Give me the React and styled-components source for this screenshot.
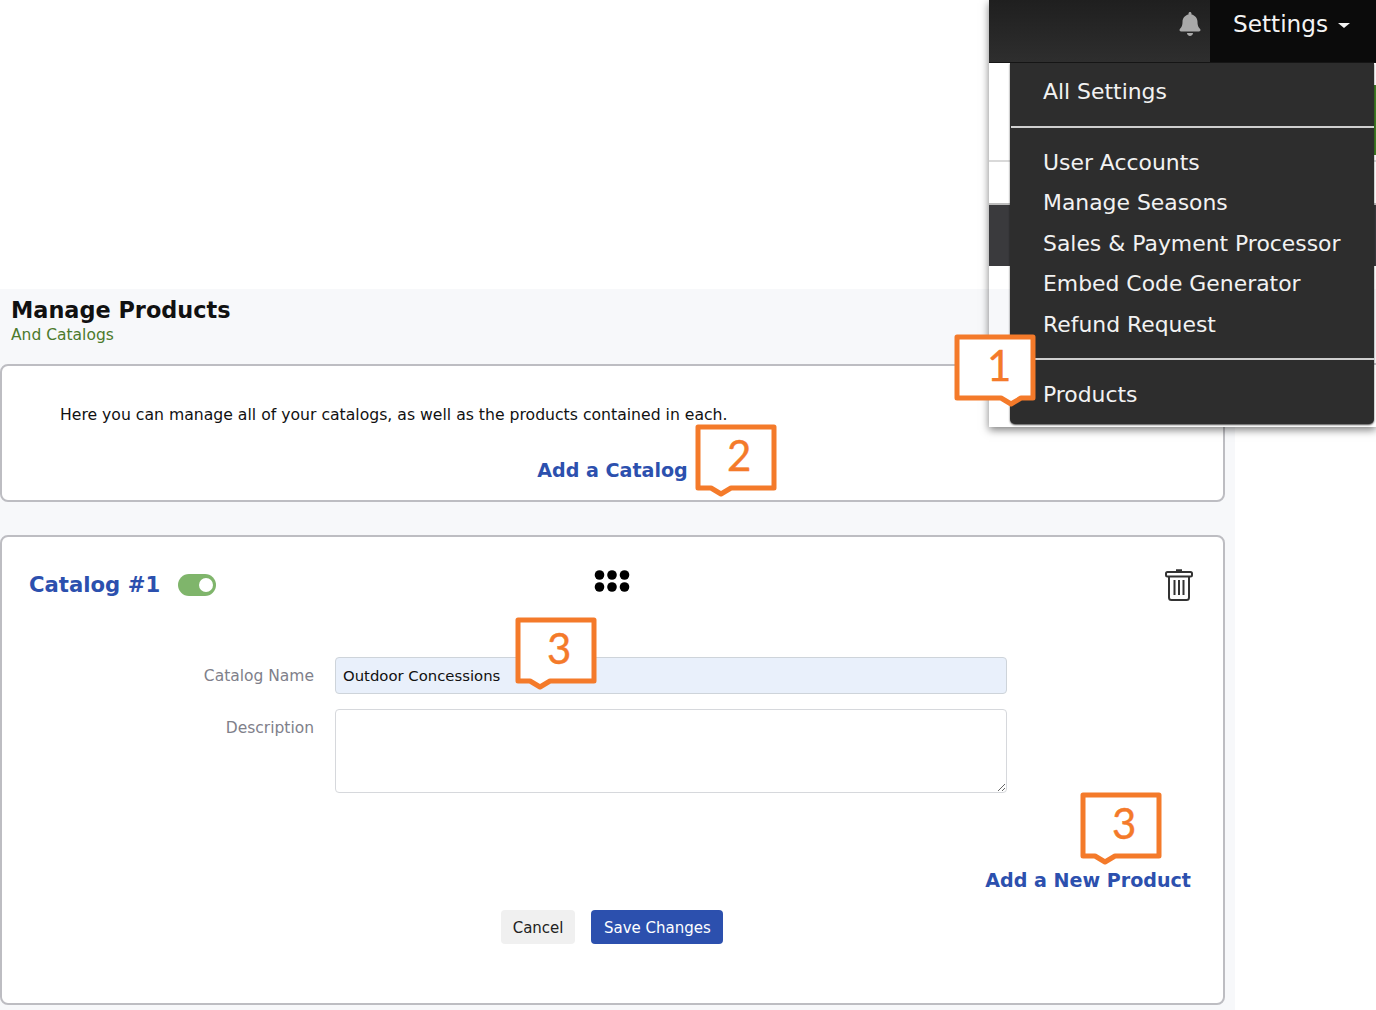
import React from "react";
import styled, { createGlobalStyle } from "styled-components";
import { FaBell } from "react-icons/fa";

const GlobalStyle = createGlobalStyle`
    html, body {
        margin: 0;
        padding: 0;
        background: #fff;
        font-family: "DejaVu Sans", Verdana, sans-serif;
    }
    * { box-sizing: border-box; }
`;

const Page = styled.div`
    position: relative;
    width: 1376px;
    height: 1010px;
    overflow: hidden;
    padding-top: 289px;
`;

const Main = styled.main`
    width: 1235px;
    height: 721px;
    background: #f7f8fa;
`;

const PageHeader = styled.header`
    padding: 7px 11px 0;
    height: 75px;
`;

const PageTitle = styled.h1`
    margin: 0;
    font-size: 22.4px;
    line-height: 28px;
    font-weight: 700;
    color: #111;
`;

const PageSubtitle = styled.div`
    margin-top: 1px;
    font-size: 15.5px;
    line-height: 20px;
    color: #4c7a2c;
`;

const Card = styled.section`
    width: 1225px;
    background: #fff;
    border: 2px solid #bdbdc2;
    border-radius: 8px;
`;

const IntroCard = styled(Card)`
    padding: 39px 58px 17px;
    margin-bottom: 33px;
`;

const IntroText = styled.p`
    margin: 0 0 34px;
    font-size: 15.67px;
    line-height: 20px;
    color: #111;
`;

const BlueLink = styled.a`
    font-size: 19.1px;
    line-height: 24px;
    font-weight: 700;
    color: #2c50ae;
    text-decoration: none;
`;

const CenterLine = styled.div`
    display: flex;
    justify-content: center;
    margin-left: -58px;
    margin-right: -58px;
`;

const CatalogCard = styled(Card)`
    padding: 32px 30px 59px 27px;
`;

const CatalogHeader = styled.div`
    display: grid;
    grid-template-columns: 1fr auto 1fr;
    align-items: center;
    height: 32px;
`;

const CatalogTitle = styled.div`
    display: flex;
    align-items: center;
    gap: 18px;
`;

const CatalogName = styled.h2`
    margin: 0;
    font-size: 21.2px;
    line-height: 28px;
    font-weight: 700;
    color: #2c50ae;
`;

const Toggle = styled.span`
    display: flex;
    justify-content: flex-end;
    align-items: center;
    width: 38px;
    height: 22px;
    padding-right: 3px;
    border-radius: 11px;
    background: #7fb56b;
`;

const ToggleKnob = styled.span`
    width: 14px;
    height: 14px;
    border-radius: 50%;
    background: #fff;
`;

const GripIcon = styled.svg`
    display: block;
    margin-top: -8px;
    margin-left: 1px;
`;

const TrashIcon = styled.svg`
    display: block;
    justify-self: end;
`;

const Form = styled.form`
    margin-top: 56px;
    display: grid;
    grid-template-columns: 285px 672px;
    column-gap: 21px;
    row-gap: 15px;
`;

const FieldLabel = styled.label`
    text-align: right;
    font-size: 15.5px;
    line-height: 20px;
    color: #80808a;
    padding-top: ${props => props.$offset}px;
`;

const TextInput = styled.input`
    width: 100%;
    height: 37px;
    padding: 0 7px;
    font-family: inherit;
    font-size: 14.85px;
    color: #111;
    background: #e9f0fb;
    border: 1px solid #ced4da;
    border-radius: 4px;
    outline: none;
`;

const TextArea = styled.textarea`
    display: block;
    width: 100%;
    height: 84px;
    padding: 7px;
    font-family: inherit;
    background: #fff;
    border: 1px solid #d6d8dc;
    border-radius: 4px;
    outline: none;
`;

const AddProductLine = styled.div`
    display: flex;
    justify-content: flex-end;
    margin-top: 76px;
    padding-right: 2px;
`;

const Buttons = styled.div`
    display: flex;
    justify-content: center;
    gap: 16px;
    margin-top: 17px;
    padding-left: 2px;
`;

const Button = styled.button`
    height: 34px;
    padding: 2px ${props => (props.$primary ? "12.5px" : "12px")} 0;
    font-family: inherit;
    font-size: 15px;
    border: none;
    border-radius: 4px;
    color: ${props => (props.$primary ? "#fff" : "#222")};
    background: ${props => (props.$primary ? "#2c50ae" : "#f0f0f0")};
`;

/* the settings window pasted over the page */
const SettingsShot = styled.div`
    position: absolute;
    top: 0;
    left: 989px;
    width: 387px;
    height: 427px;
    display: flex;
    flex-direction: column;
    background: #fff;
    box-shadow: 0 3px 8px rgba(0, 0, 0, 0.5);
`;

const TopBar = styled.div`
    display: flex;
    justify-content: flex-end;
    align-items: stretch;
    height: 63px;
    flex-shrink: 0;
    background: linear-gradient(#1f1f1f, #2e2e2e);
    border-bottom: 1px solid #161616;
`;

const BellSlot = styled.div`
    display: flex;
    justify-content: center;
    padding-top: 12px;
    width: 40px;
    color: #a9a9a9;
    font-size: 24px;
`;

const SettingsTab = styled.div`
    display: flex;
    align-items: center;
    gap: 10px;
    width: 166px;
    padding: 0 0 16px 23px;
    background: #0b0b0b;
    color: #f4f4f4;
    font-size: 23.2px;
`;

const Caret = styled.span`
    width: 0;
    height: 0;
    margin-top: 4px;
    border-left: 6px solid transparent;
    border-right: 6px solid transparent;
    border-top: 5px solid #f4f4f4;
`;

const Backdrop = styled.div`
    display: flex;
    flex-direction: column;
    flex: 1;
    width: 100%;
`;

const BackdropBand = styled.div`
    height: ${props => props.$height}px;
    background: ${props => props.$color};
`;

const GreenEdge = styled.div`
    position: absolute;
    top: 85px;
    right: 0;
    width: 2px;
    height: 70px;
    background: #3f7d24;
`;

const Menu = styled.nav`
    position: absolute;
    top: 63px;
    left: 21px;
    width: 364px;
    height: 361px;
    padding-top: 9px;
    background: #2d2d2d;
    border-radius: 0 0 5px 5px;
    box-shadow: 0 1px 2px rgba(0, 0, 0, 0.7);
`;

const MenuItem = styled.a`
    display: block;
    height: 40.6px;
    padding-left: 33px;
    font-size: 21.9px;
    line-height: 40px;
    color: #f2f2f2;
    white-space: nowrap;
`;

const MenuDivider = styled.hr`
    height: 2px;
    margin: ${props => props.$top}px 0 ${props => props.$bottom}px 1px;
    border: none;
    background: #cfcfcf;
`;

/* numbered orange markers that sit over the page */
const CalloutBox = styled.div`
    position: absolute;
    left: ${props => props.$left}px;
    top: ${props => props.$top}px;
    width: 82px;
    height: 74px;
`;

const CalloutShape = styled.svg`
    display: block;
`;

const CalloutNumber = styled.span`
    position: absolute;
    top: 6px;
    left: ${props => props.$x}px;
    font-family: Lato, "Open Sans", sans-serif;
    font-size: 42px;
    line-height: 50px;
    color: #f47a2a;
    -webkit-text-stroke: 0.4px #f47a2a;
`;

const Callout = ({ left, top, tail, numberX, children }) => (
    <CalloutBox $left={left} $top={top}>
        <CalloutShape width="82" height="74" viewBox="0 0 82 74">
            <path
                d={`M3 3H79V64H${tail + 10}L${tail} 70L${tail - 10} 64H3Z`}
                fill="#fff"
                stroke="#f47a2a"
                strokeWidth="5"
                strokeLinejoin="round"
            />
        </CalloutShape>
        <CalloutNumber $x={numberX}>{children}</CalloutNumber>
    </CalloutBox>
);

const Grip = () => (
    <GripIcon width="36" height="24" viewBox="0 0 36 24" fill="#000">
        {[5.5, 18, 30.5].map(x => [6, 18].map(y => <circle key={x + "-" + y} cx={x} cy={y} r="4.8" />))}
    </GripIcon>
);

const Trash = () => (
    <TrashIcon width="28" height="32" viewBox="0 0 28 32" fill="none" stroke="#333" strokeWidth="2">
        <path d="M11 1.5H17" strokeWidth="2.5" />
        <rect x="1" y="3" width="26" height="4.5" rx="1.5" />
        <path d="M4 8V28.5Q4 31 6.5 31H21.5Q24 31 24 28.5V8" />
        <path d="M9.5 11V26M14 11V26M18.5 11V26" />
    </TrashIcon>
);

const App = () => {
    return (
        <Page>
            <GlobalStyle />
            <Main>
                <PageHeader>
                    <PageTitle>Manage Products</PageTitle>
                    <PageSubtitle>And Catalogs</PageSubtitle>
                </PageHeader>
                <IntroCard>
                    <IntroText>Here you can manage all of your catalogs, as well as the products contained in each.</IntroText>
                    <CenterLine>
                        <BlueLink>Add a Catalog</BlueLink>
                    </CenterLine>
                </IntroCard>
                <CatalogCard>
                    <CatalogHeader>
                        <CatalogTitle>
                            <CatalogName>Catalog #1</CatalogName>
                            <Toggle><ToggleKnob /></Toggle>
                        </CatalogTitle>
                        <Grip />
                        <Trash />
                    </CatalogHeader>
                    <Form>
                        <FieldLabel $offset={9}>Catalog Name</FieldLabel>
                        <TextInput defaultValue="Outdoor Concessions" />
                        <FieldLabel $offset={9}>Description</FieldLabel>
                        <TextArea />
                    </Form>
                    <AddProductLine>
                        <BlueLink>Add a New Product</BlueLink>
                    </AddProductLine>
                    <Buttons>
                        <Button>Cancel</Button>
                        <Button $primary>Save Changes</Button>
                    </Buttons>
                </CatalogCard>
            </Main>

            <SettingsShot>
                <TopBar>
                    <BellSlot><FaBell /></BellSlot>
                    <SettingsTab>Settings <Caret /></SettingsTab>
                </TopBar>
                <Backdrop>
                    <BackdropBand $height={97} $color="#fff" />
                    <BackdropBand $height={2} $color="#d9d9d9" />
                    <BackdropBand $height={41} $color="#fff" />
                    <BackdropBand $height={2} $color="#bdbdbd" />
                    <BackdropBand $height={61} $color="#3a3a3d" />
                    <BackdropBand $height={23} $color="#fff" />
                    <BackdropBand $height={74} $color="#f7f8fa" />
                    <BackdropBand $height={2} $color="#bdbdc2" />
                </Backdrop>
                <GreenEdge />
                <Menu>
                    <MenuItem>All Settings</MenuItem>
                    <MenuDivider $top={13} $bottom={15} />
                    <MenuItem>User Accounts</MenuItem>
                    <MenuItem>Manage Seasons</MenuItem>
                    <MenuItem>Sales &amp; Payment Processor</MenuItem>
                    <MenuItem>Embed Code Generator</MenuItem>
                    <MenuItem>Refund Request</MenuItem>
                    <MenuDivider $top={12} $bottom={15} />
                    <MenuItem>Products</MenuItem>
                </Menu>
            </SettingsShot>

            <Callout left={954} top={334} tail={57} numberX={33}>1</Callout>
            <Callout left={695} top={424} tail={26} numberX={32}>2</Callout>
            <Callout left={515} top={617} tail={25} numberX={32}>3</Callout>
            <Callout left={1080} top={792} tail={25} numberX={32}>3</Callout>
        </Page>
    );
};

export default App;
